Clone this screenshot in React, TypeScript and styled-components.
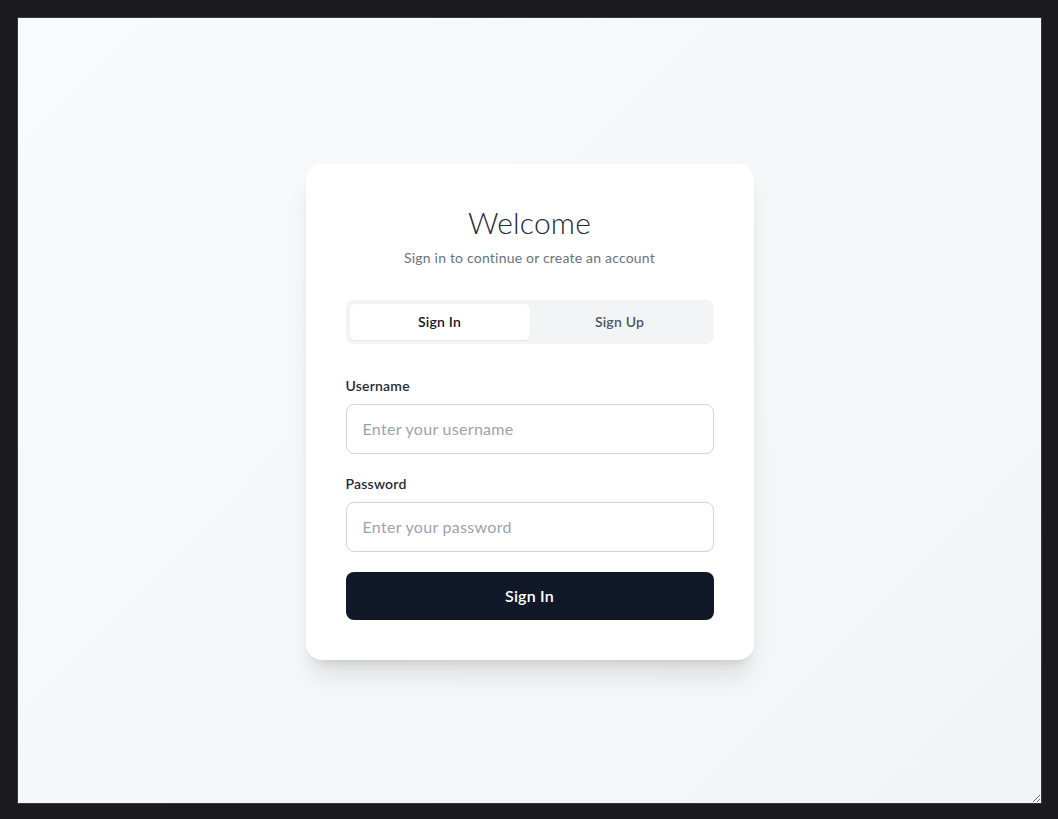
import React, { FC, useState } from 'react'
import styled, { createGlobalStyle } from 'styled-components'

const GlobalStyle = createGlobalStyle`
  html, body {
    margin: 0;
    background: #1b1b1d;
  }
  * {
    box-sizing: border-box;
  }
`

const Frame = styled.div`
  margin: 17px 0 0 17px;
  width: 1025px;
  height: 787px;
  border: 1px solid #3a3a3c;
  resize: both;
  overflow: auto;
  display: flex;
  background: linear-gradient(135deg, #f9fafb 0%, #f3f4f6 100%);
  font-family: 'Lato', 'Noto Sans', sans-serif;
  letter-spacing: 0.2px;
`

const Page = styled.main`
  flex: 1;
  display: flex;
  align-items: center;
  justify-content: center;
  padding: 18px 16px 16px;
`

const Card = styled.section`
  width: 448px;
  padding: 40px;
  background: #ffffff;
  border-radius: 16px;
  box-shadow: 0 20px 25px -5px rgba(0, 0, 0, 0.1),
    0 8px 10px -6px rgba(0, 0, 0, 0.1);
`

const Header = styled.header`
  text-align: center;
  margin-bottom: 32px;
`

const Title = styled.h1`
  margin: 0;
  font-size: 30px;
  line-height: 36px;
  font-weight: 300;
  color: #1f2937;
`

const Subtitle = styled.p`
  margin: 8px 0 0;
  font-size: 14px;
  line-height: 20px;
  color: #6b7280;
`

const Tabs = styled.div`
  display: grid;
  grid-template-columns: 1fr 1fr;
  padding: 4px;
  background: #f3f4f6;
  border-radius: 8px;
  margin-bottom: 32px;
`

const Tab = styled.button<{ $active: boolean }>`
  height: 36px;
  border: none;
  border-radius: 6px;
  font-family: inherit;
  letter-spacing: inherit;
  font-size: 14px;
  font-weight: 600;
  cursor: pointer;
  color: ${(p) => (p.$active ? '#111827' : '#4b5563')};
  background: ${(p) => (p.$active ? '#ffffff' : 'transparent')};
  box-shadow: ${(p) =>
    p.$active ? '0 1px 2px 0 rgba(0, 0, 0, 0.06)' : 'none'};
`

const Form = styled.form`
  display: flex;
  flex-direction: column;
  gap: 20px;
`

const Field = styled.div`
  display: flex;
  flex-direction: column;
  gap: 8px;
`

const Label = styled.label`
  font-size: 14px;
  line-height: 20px;
  font-weight: 600;
  color: #1f2937;
`

const Input = styled.input`
  height: 50px;
  padding: 0 16px;
  border: 1px solid #d1d5db;
  border-radius: 8px;
  font-family: inherit;
  letter-spacing: 0.3px;
  font-size: 16px;
  color: #111827;
  outline: none;
  &::placeholder {
    color: #9ca3af;
  }
`

const Submit = styled.button`
  height: 48px;
  border: none;
  border-radius: 8px;
  background: #111827;
  color: #ffffff;
  font-family: inherit;
  letter-spacing: inherit;
  font-size: 16px;
  font-weight: 600;
  cursor: pointer;
`

const App: FC = () => {
  const [mode, setMode] = useState<'in' | 'up'>('in')
  return (
    <>
      <GlobalStyle />
      <Frame>
        <Page>
          <Card>
            <Header>
              <Title>Welcome</Title>
              <Subtitle>Sign in to continue or create an account</Subtitle>
            </Header>
            <Tabs>
              <Tab type="button" $active={mode === 'in'} onClick={() => setMode('in')}>
                Sign In
              </Tab>
              <Tab type="button" $active={mode === 'up'} onClick={() => setMode('up')}>
                Sign Up
              </Tab>
            </Tabs>
            <Form onSubmit={(e) => e.preventDefault()}>
              <Field>
                <Label htmlFor="username">Username</Label>
                <Input id="username" placeholder="Enter your username" />
              </Field>
              <Field>
                <Label htmlFor="password">Password</Label>
                <Input id="password" type="password" placeholder="Enter your password" />
              </Field>
              <Submit type="submit">{mode === 'in' ? 'Sign In' : 'Sign Up'}</Submit>
            </Form>
          </Card>
        </Page>
      </Frame>
    </>
  )
}

export default App
